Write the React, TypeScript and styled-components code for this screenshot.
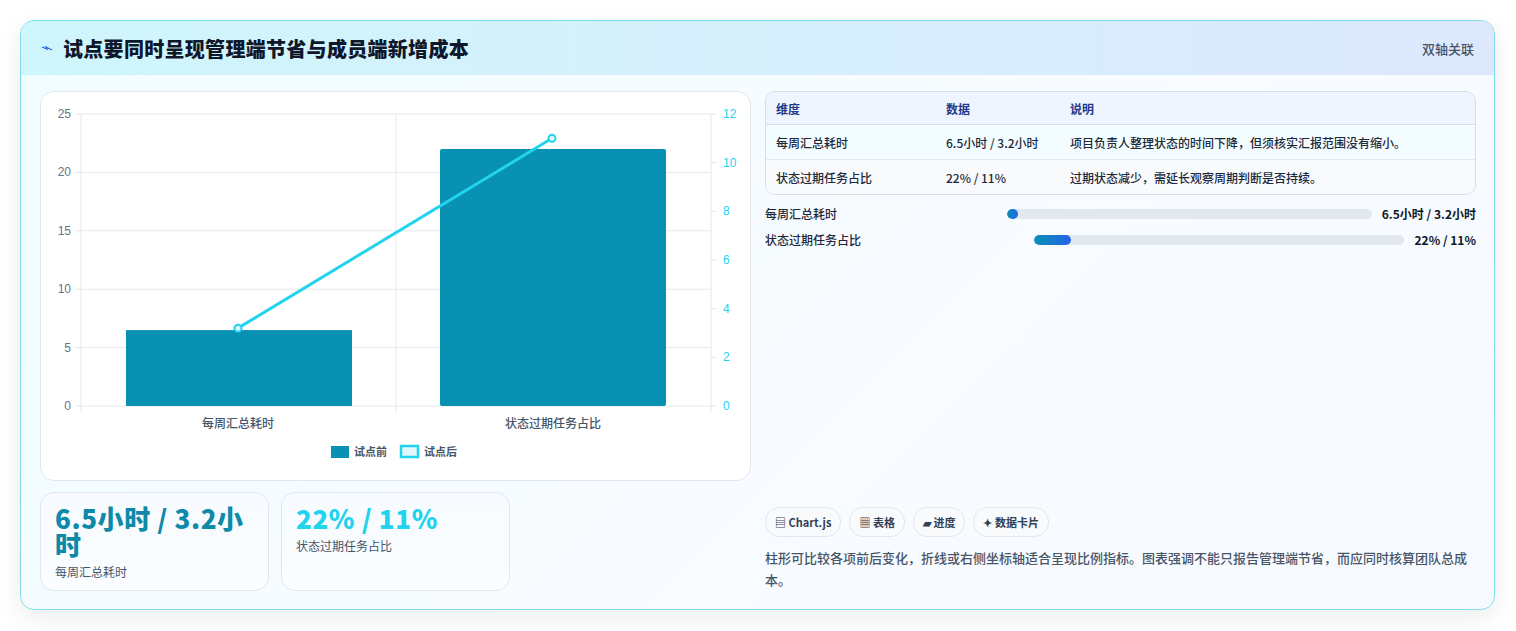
import React from 'react';
import styled, { createGlobalStyle } from 'styled-components';

const GlobalStyle = createGlobalStyle`
  body {
    margin: 0;
    background: #ffffff;
    font-family: "Noto Sans CJK SC", "Noto Sans", sans-serif;
    color: #1e293b;
  }
`;

const Page = styled.div`
  padding: 20px 21px 20px 20px;
`;

const Card = styled.section`
  height: 588px;
  border: 1px solid #7fdde8;
  border-radius: 14px;
  overflow: hidden;
  background: linear-gradient(135deg, #f0fdff 0%, #f8fbff 60%, #f6faff 100%);
  box-shadow: 0 8px 24px rgba(15, 23, 42, 0.08);
  display: flex;
  flex-direction: column;
`;

const Header = styled.header`
  height: 55px;
  padding: 0 20px;
  display: flex;
  align-items: center;
  justify-content: space-between;
  background: linear-gradient(90deg, #cff6fc 0%, #d7eefc 60%, #dde8fd 100%);
`;

const Title = styled.h2`
  margin: 0;
  font-size: 20px;
  font-weight: 800;
  letter-spacing: 0.3px;
  color: #0f172a;
  display: flex;
  align-items: center;
  gap: 10px;
`;

const Tag = styled.span`
  font-size: 13px;
  color: #475569;
  font-weight: 500;
`;

const Body = styled.div`
  flex: 1;
  display: grid;
  grid-template-columns: 711px 1fr;
  gap: 14px;
  padding: 16px 18px 18px 19px;
`;

const LeftCol = styled.div`
  display: flex;
  flex-direction: column;
  gap: 11px;
`;

const ChartBox = styled.div`
  height: 388px;
  background: #ffffff;
  border: 1px solid #dfe7f1;
  border-radius: 14px;
  overflow: hidden;
`;

const Stats = styled.div`
  display: flex;
  gap: 12px;
`;

const Stat = styled.div`
  width: 229px;
  height: 99px;
  box-sizing: border-box;
  padding: 12px 14px;
  border: 1px solid #dfe7f1;
  border-radius: 14px;
  background: linear-gradient(180deg, #f7fbff, #fbfdff);
`;

const StatValue = styled.div<{ $color: string }>`
  font-size: 26px;
  font-weight: 800;
  letter-spacing: 0.6px;
  line-height: 26px;
  color: ${(p) => p.$color};
`;

const StatLabel = styled.div`
  font-size: 12px;
  color: #475569;
  margin-top: 6px;
`;

const RightCol = styled.div`
  display: flex;
  flex-direction: column;
`;

const Table = styled.table`
  width: 100%;
  border-collapse: separate;
  border-spacing: 0;
  border: 1px solid #d5dfeb;
  border-radius: 10px;
  overflow: hidden;
  font-size: 12px;
  th {
    text-align: left;
    font-weight: 600;
    color: #1e3a8a;
    background: #eef5fe;
    height: 32px;
    padding: 0 10px;
    border-bottom: 1px solid #d5dfeb;
  }
  td {
    height: 34px;
    padding: 0 10px;
    color: #1e293b;
    font-weight: 500;
  }
  tr:nth-child(1) td { background: #f3fdff; border-bottom: 1px solid #e2e8f0; }
  tr:nth-child(2) td { background: #f8fafc; }
`;

const Bars = styled.div`
  display: flex;
  flex-direction: column;
  gap: 9px;
  margin-top: 10px;
`;

const BarRow = styled.div`
  display: flex;
  align-items: center;
  gap: 8px;
  font-size: 12px;
  font-weight: 500;
`;

const BarLabel = styled.span`
  flex: 1 1 auto;
  color: #1e293b;
`;

const Track = styled.div`
  flex: 2.25 1 0;
  height: 10px;
  border-radius: 5px;
  background: #e2e8f0;
  overflow: hidden;
`;

const Fill = styled.div`
  height: 100%;
  border-radius: 5px;
  background: linear-gradient(90deg, #0891b2, #2563eb);
`;

const BarValue = styled.span`
  font-weight: 700;
  color: #0f172a;
  margin-left: 2px;
`;

const Spacer = styled.div`
  flex: 1;
`;

const Chips = styled.div`
  display: flex;
  gap: 8px;
`;

const Chip = styled.span`
  height: 28px;
  padding: 0 9px;
  display: inline-flex;
  align-items: center;
  gap: 3px;
  border: 1px solid #e2e8f0;
  border-radius: 14px;
  background: #f8fafc;
  font-size: 11px;
  font-weight: 600;
  color: #334155;
`;

const Note = styled.p`
  margin: 10px 0 0;
  font-size: 13px;
  line-height: 22px;
  color: #475569;
  font-weight: 500;
`;

const BarChart = () => {
  const top = 22;
  const bottom = 314;
  const left = 40;
  const right = 670;
  const ly = (v: number) => bottom - (v / 25) * (bottom - top);
  const ry = (v: number) => bottom - (v / 12) * (bottom - top);
  const axis = { fontSize: 12, fill: '#64748b', fontFamily: 'Liberation Sans, sans-serif' };
  return (
    <svg width="710" height="388" viewBox="0 0 710 388">
      {[0, 5, 10, 15, 20, 25].map((v) => (
        <g key={v}>
          <line x1={left - 6} x2={right} y1={ly(v)} y2={ly(v)} stroke="#e5e7eb" />
          <text x={left - 10} y={ly(v) + 4} textAnchor="end" {...axis}>{v}</text>
        </g>
      ))}
      {[0, 2, 4, 6, 8, 10, 12].map((v) => (
        <g key={v}>
          <line x1={right} x2={right + 6} y1={ry(v)} y2={ry(v)} stroke="#e5e7eb" />
          <text x={right + 12} y={ry(v) + 4} {...axis} fill="#22d3ee">{v}</text>
        </g>
      ))}
      {[left, 355, right].map((x) => (
        <line key={x} x1={x} x2={x} y1={top} y2={bottom + 6} stroke="#e5e7eb" />
      ))}
      <rect x={85} y={ly(6.5)} width={226} height={bottom - ly(6.5)} fill="#0891b2" />
      <rect x={399} y={ly(22)} width={226} height={bottom - ly(22)} fill="#0891b2" rx="2" />
      <line x1={197} y1={ry(3.2)} x2={511} y2={ry(11)} stroke="#22d3ee" strokeWidth="3" />
      <circle cx={197} cy={ry(3.2)} r="3.5" fill="#e0f7fb" stroke="#22d3ee" strokeWidth="2" />
      <circle cx={511} cy={ry(11)} r="3.5" fill="#e0f7fb" stroke="#22d3ee" strokeWidth="2" />
      <text x={197} y={336} textAnchor="middle" fontSize="12" fill="#475569" fontWeight="500">每周汇总耗时</text>
      <text x={512} y={336} textAnchor="middle" fontSize="12" fill="#475569" fontWeight="500">状态过期任务占比</text>
      <rect x={290} y={354} width={18} height={12} fill="#0891b2" />
      <text x={313} y={364} fontSize="11" fill="#475569" fontWeight="600">试点前</text>
      <rect x={360} y={354} width={17} height={11} fill="#e0f7fb" stroke="#22d3ee" strokeWidth="2.5" />
      <text x={383} y={364} fontSize="11" fill="#475569" fontWeight="600">试点后</text>
    </svg>
  );
};

const bars = [
  { label: '每周汇总耗时', value: '6.5小时 / 3.2小时', pct: 3 },
  { label: '状态过期任务占比', value: '22% / 11%', pct: 10 },
];

export default function App() {
  return (
    <Page>
      <GlobalStyle />
      <Card>
        <Header>
          <Title>
            <svg width="12" height="12" viewBox="0 0 12 12">
              <path d="M1 5 L6 7 L5 5 L11 8" fill="none" stroke="#2563eb" strokeWidth="1.2" />
            </svg>
            试点要同时呈现管理端节省与成员端新增成本
          </Title>
          <Tag>双轴关联</Tag>
        </Header>
        <Body>
          <LeftCol>
            <ChartBox>
              <BarChart />
            </ChartBox>
            <Stats>
              <Stat>
                <StatValue $color="#0e8aa8">6.5小时 / 3.2小时</StatValue>
                <StatLabel>每周汇总耗时</StatLabel>
              </Stat>
              <Stat>
                <StatValue $color="#22d3ee">22% / 11%</StatValue>
                <StatLabel>状态过期任务占比</StatLabel>
              </Stat>
            </Stats>
          </LeftCol>
          <RightCol>
            <Table>
              <thead>
                <tr>
                  <th style={{ width: 150 }}>维度</th>
                  <th style={{ width: 104 }}>数据</th>
                  <th>说明</th>
                </tr>
              </thead>
              <tbody>
                <tr>
                  <td>每周汇总耗时</td>
                  <td>6.5小时 / 3.2小时</td>
                  <td>项目负责人整理状态的时间下降，但须核实汇报范围没有缩小。</td>
                </tr>
                <tr>
                  <td>状态过期任务占比</td>
                  <td>22% / 11%</td>
                  <td>过期状态减少，需延长观察周期判断是否持续。</td>
                </tr>
              </tbody>
            </Table>
            <Bars>
              {bars.map((b) => (
                <BarRow key={b.label}>
                  <BarLabel>{b.label}</BarLabel>
                  <Track>
                    <Fill style={{ width: `${b.pct}%` }} />
                  </Track>
                  <BarValue>{b.value}</BarValue>
                </BarRow>
              ))}
            </Bars>
            <Spacer />
            <Chips>
              <Chip>▤ Chart.js</Chip>
              <Chip>▦ 表格</Chip>
              <Chip>▰ 进度</Chip>
              <Chip>✦ 数据卡片</Chip>
            </Chips>
            <Note>
              柱形可比较各项前后变化，折线或右侧坐标轴适合呈现比例指标。图表强调不能只报告管理端节省，而应同时核算团队总成本。
            </Note>
          </RightCol>
        </Body>
      </Card>
    </Page>
  );
}
